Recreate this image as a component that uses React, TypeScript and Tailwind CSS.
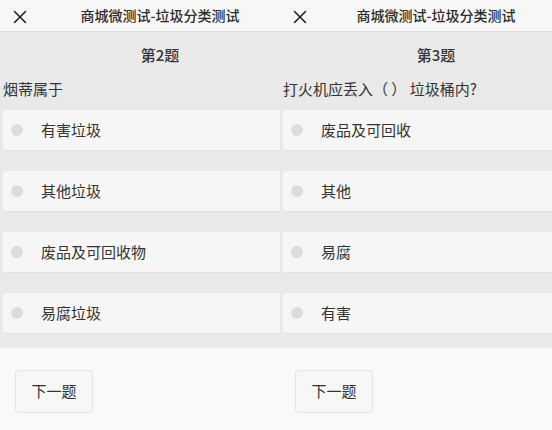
const font = { fontFamily: '"Noto Sans CJK SC", "Noto Sans", sans-serif' };

type Quiz = {
  no: number;
  question: string;
  options: string[];
};

const quizzes: Quiz[] = [
  { no: 2, question: "烟蒂属于", options: ["有害垃圾", "其他垃圾", "废品及可回收物", "易腐垃圾"] },
  { no: 3, question: "打火机应丢入（ ） 垃圾桶内?", options: ["废品及可回收", "其他", "易腐", "有害"] },
];

const CloseIcon = () => (
  <svg width="14" height="14" viewBox="0 0 14 14" fill="none">
    <path d="M1.5 1.5 L12.5 12.5 M12.5 1.5 L1.5 12.5" stroke="#222" strokeWidth="1.6" strokeLinecap="round" />
  </svg>
);

const Panel = ({ quiz, className }: { quiz: Quiz; className: string }) => {
  return (
    <div className={`${className} flex flex-col`}>
      {/* Header */}
      <div className="flex h-[32px] items-center border-b border-b-[#e2e2e2] bg-[#f7f7f7]">
        <div className="flex w-[40px] justify-center pt-[2px]">
          <CloseIcon />
        </div>
        <div className="flex-1 text-center text-[14px] font-medium text-[#2a2a2a]">商城微测试-垃圾分类测试</div>
      </div>

      {/* Body */}
      <div className="bg-[#e9e9e9] pb-[13px]">
        <div className="flex h-[46px] items-center pl-[40px]">
          <div className="flex-1 text-center text-[15px] font-medium text-[#333]">第{quiz.no}题</div>
        </div>
        <div className="h-[22px] pl-[3px] text-[15px] leading-[22px] text-[#333]">{quiz.question}</div>
        <div className="mt-[10px] flex flex-col gap-[20px] pl-[3px]">
          {quiz.options.map((opt) => (
            <div
              key={opt}
              className="flex h-[41px] items-center rounded-l-[2px] border-b border-b-[#e0e0e0] bg-[#f6f6f6]"
            >
              <span className="ml-[8px] h-[12px] w-[12px] rounded-full bg-[#dcdcdc]" />
              <span className="ml-[18px] text-[15px] text-[#333]">{opt}</span>
            </div>
          ))}
        </div>
      </div>

      {/* Footer */}
      <div className="flex-1 border-t border-t-[#efefef] bg-[#f9f9f9] pl-[15px] pt-[22px]">
        <button className="h-[43px] w-[78px] rounded-[4px] border border-[#e2e2e2] bg-[#f7f7f7] text-[15px] text-[#333]">
          下一题
        </button>
      </div>
    </div>
  );
};

export default function App() {
  return (
    <div className="flex h-[430px] w-[552px] overflow-hidden bg-[#f9f9f9]" style={font}>
      <Panel quiz={quizzes[0]} className="w-[280px]" />
      <Panel quiz={quizzes[1]} className="flex-1" />
    </div>
  );
}
